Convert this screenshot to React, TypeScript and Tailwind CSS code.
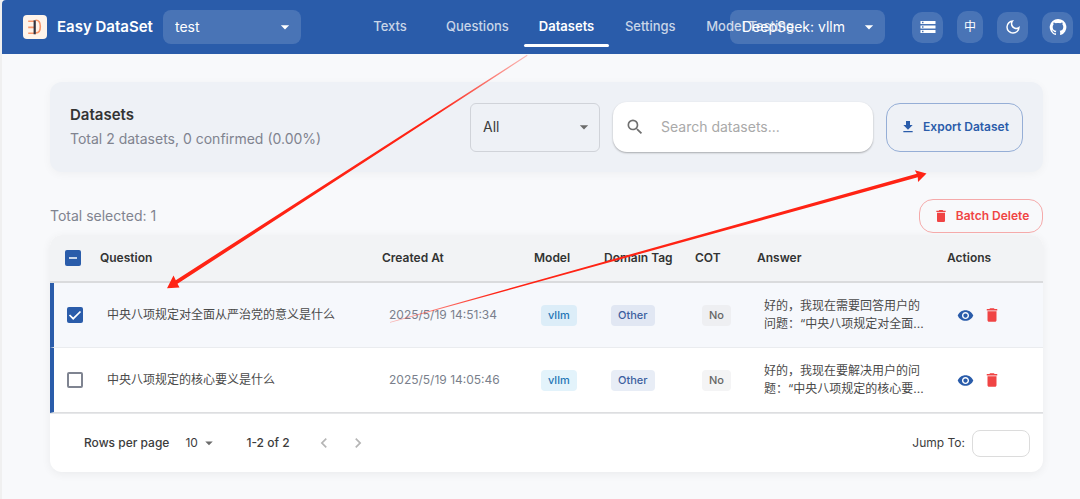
import { ReactNode } from "react";
import {
  MdArrowDropDown,
  MdChevronLeft,
  MdChevronRight,
  MdDelete,
  MdDownload,
  MdOutlineDarkMode,
  MdSearch,
  MdStorage,
  MdVisibility,
} from "react-icons/md";

type Row = {
  question: string;
  createdAt: string;
  model: string;
  tag: string;
  cot: string;
  answer: string[];
  selected: boolean;
};

const tabs = ["Texts", "Questions", "Datasets", "Settings", "Model Testing"];

const rows: Row[] = [
  {
    question: "中央八项规定对全面从严治党的意义是什么",
    createdAt: "2025/5/19 14:51:34",
    model: "vllm",
    tag: "Other",
    cot: "No",
    answer: ["好的，我现在需要回答用户的", "问题：“中央八项规定对全面..."],
    selected: true,
  },
  {
    question: "中央八项规定的核心要义是什么",
    createdAt: "2025/5/19 14:05:46",
    model: "vllm",
    tag: "Other",
    cot: "No",
    answer: ["好的，我现在要解决用户的问", "题：“中央八项规定的核心要..."],
    selected: false,
  },
];

function Logo() {
  return (
    <svg viewBox="0 0 24 24" className="size-6 shrink-0" aria-hidden="true">
      <rect width="24" height="24" rx="4" fill="#fff4ea" />
      <g fill="none" stroke="#f8956a" strokeWidth="1.6">
        <path d="M5.2 6.3h6M5.2 12.400h6M5.200 18.300h6" />
        <path d="M12.500 5.200h.6c2.700 0 4.200 2 4.200 6.300s-1.500 6.400-4.200 6.400h-.6" />
      </g>
      <path d="M11.700 5.300v14" stroke="#33333f" strokeWidth="2.200" />
    </svg>
  );
}

function GitHubIcon() {
  return (
    <svg viewBox="0 0 24 24" className="size-[18px]" fill="currentColor" aria-hidden="true">
      <path d="M12 1.27a11 11 0 00-3.48 21.46c.55.09.73-.28.73-.55v-1.84c-3.03.64-3.67-1.46-3.67-1.46-.55-1.29-1.28-1.65-1.28-1.65-.92-.65.1-.65.1-.65 1.1 0 1.73 1.1 1.73 1.1.92 1.65 2.57 1.2 3.21.92a2 2 0 01.64-1.47c-2.47-.27-5.04-1.19-5.04-5.5 0-1.1.46-2.1 1.2-2.84a3.76 3.76 0 010-2.93s.91-.28 3.11 1.1c1.8-.49 3.7-.49 5.5 0 2.1-1.38 3.02-1.1 3.02-1.1a3.76 3.76 0 01.1 2.93c.74.74 1.19 1.74 1.19 2.84 0 4.32-2.58 5.23-5.04 5.5.45.37.82.92.82 2.02v3.03c0 .27.1.64.73.55A11 11 0 0012 1.27" />
    </svg>
  );
}

function HeaderSelect({ label, value, className }: { label: string; value: string; className: string }) {
  return (
    <div className={`relative shrink-0 ${className}`}>
      <select
        aria-label={label}
        className="h-[34px] w-full appearance-none rounded-lg bg-white/15 pl-3 text-sm text-white"
      >
        <option>{value}</option>
      </select>
      <MdArrowDropDown className="pointer-events-none absolute top-[7px] right-[6px] size-5 text-white" />
    </div>
  );
}

function HeaderButton({ label, className, children }: { label: string; className: string; children: ReactNode }) {
  return (
    <button
      type="button"
      aria-label={label}
      className={`flex shrink-0 items-center justify-center rounded-[10px] bg-white/15 text-white ${className}`}
    >
      {children}
    </button>
  );
}

function Header() {
  return (
    <header className="flex h-[54px] items-center rounded-tl bg-[#2a5caa] pr-[7px] pl-[21px]">
      <Logo />
      <span className="ml-[10px] w-[93px] shrink-0 text-[15px] font-semibold whitespace-nowrap text-white">
        Easy DataSet
      </span>
      <HeaderSelect label="Project" value="test" className="ml-[13px] w-[138px]" />
      <nav className="ml-12 flex h-full min-w-0 flex-1">
        {tabs.map((tab) => (
          <a
            key={tab}
            href="#"
            className={`relative flex h-[54px] min-w-[82px] shrink-0 items-center justify-center px-[15px] text-[13px] whitespace-nowrap ${
              tab === "Datasets" ? "font-semibold text-white" : "font-medium text-white/75"
            }`}
          >
            {tab}
            {tab === "Datasets" && (
              <span className="absolute inset-x-0 bottom-[7px] h-[3px] rounded-full bg-white" />
            )}
          </a>
        ))}
      </nav>
      <HeaderSelect label="Model" value="DeepSeek: vllm" className="w-[155px]" />
      <div className="ml-[27px] flex shrink-0 items-center gap-[14px]">
        <HeaderButton label="Data sources" className="size-[31px]">
          <MdStorage className="size-[18px]" />
        </HeaderButton>
        <HeaderButton label="Language" className="h-8 w-[26px] text-xs">
          中
        </HeaderButton>
        <HeaderButton label="Dark mode" className="size-[31px]">
          <MdOutlineDarkMode className="size-[18px]" />
        </HeaderButton>
        <HeaderButton label="GitHub" className="size-[31px]">
          <GitHubIcon />
        </HeaderButton>
      </div>
    </header>
  );
}

function Toolbar() {
  return (
    <section className="flex items-center rounded-xl bg-[#eef1f6] px-5 py-5 shadow-[0_2px_10px_rgba(0,0,0,0.04)]">
      <div className="flex-1">
        <h1 className="text-[15px] leading-6 font-semibold text-[#333]">Datasets</h1>
        <p className="text-sm leading-6 text-[#80838f]">Total 2 datasets, 0 confirmed (0.00%)</p>
      </div>
      <div className="relative w-[130px]">
        <select
          aria-label="Status"
          className="h-[49px] w-full appearance-none rounded-md border border-[#d0d3d9] bg-transparent pl-3 text-sm text-[#3c3c3c]"
        >
          <option>All</option>
        </select>
        <MdArrowDropDown className="pointer-events-none absolute top-[14px] right-[6px] size-5 text-[#6b6b6b]" />
      </div>
      <label className="ml-[13px] flex h-[50px] w-[260px] items-center rounded-[14px] bg-white pl-3 shadow-[0_1px_2px_rgba(0,0,0,0.3)]">
        <MdSearch className="size-5 shrink-0 text-[#707070]" />
        <input
          aria-label="Search datasets"
          placeholder="Search datasets..."
          className="ml-4 w-full min-w-0 bg-transparent text-sm text-[#333] outline-none placeholder:text-[#a9a9a9]"
        />
      </label>
      <button
        type="button"
        className="ml-[13px] flex h-[49px] w-[137px] items-center justify-center gap-[7px] rounded-[14px] border border-[#95aed6] text-xs font-semibold whitespace-nowrap text-[#2a5caa]"
      >
        <MdDownload className="size-4" />
        Export Dataset
      </button>
    </section>
  );
}

function Chip({ className, children }: { className: string; children: ReactNode }) {
  return (
    <span className={`inline-flex h-[21px] items-center rounded px-[7px] text-[11px] font-medium ${className}`}>
      {children}
    </span>
  );
}

function MinusMark() {
  return (
    <svg viewBox="0 0 16 16" className="pointer-events-none absolute inset-0 size-4" aria-hidden="true">
      <path d="M4 8h8" stroke="#fff" strokeWidth="1.5" />
    </svg>
  );
}

function CheckMark() {
  return (
    <svg viewBox="0 0 16 16" className="pointer-events-none absolute inset-0 size-4" aria-hidden="true">
      <path d="M2.5 8l3.700 3.700L13.500 4.500" fill="none" stroke="#fff" strokeWidth="1.700" />
    </svg>
  );
}

function CheckBox({ label, filled, mark }: { label: string; filled: boolean; mark?: ReactNode }) {
  return (
    <span className="relative block size-4">
      <input
        type="checkbox"
        aria-label={label}
        defaultChecked={filled}
        className={`block size-4 appearance-none rounded-xs ${
          filled ? "bg-[#2a5caa]" : "border-2 border-[#7f8491] bg-white"
        }`}
      />
      {mark}
    </span>
  );
}

function DatasetTable() {
  return (
    <table className="w-full table-fixed border-separate border-spacing-0 text-left text-xs">
      <colgroup>
        <col className="w-9" />
        <col />
        <col className="w-[152px]" />
        <col className="w-[70px]" />
        <col className="w-[91px]" />
        <col className="w-[62px]" />
        <col className="w-[190px]" />
        <col className="w-[110px]" />
      </colgroup>
      <thead>
        <tr className="h-12 bg-[#f2f3f5] text-[#333]">
          <th className="border-b-2 border-[#dadbdd] pl-[15px]">
            <CheckBox label="Select all" filled mark={<MinusMark />} />
          </th>
          {["Question", "Created At", "Model", "Domain Tag", "COT", "Answer", "Actions"].map((head) => (
            <th key={head} className="border-b-2 border-[#dadbdd] pl-[14px] font-semibold whitespace-nowrap">
              {head}
            </th>
          ))}
        </tr>
      </thead>
      <tbody>
        {rows.map((row) => (
          <tr
            key={row.createdAt}
            className={`h-[65px] *:border-b ${
              row.selected ? "bg-[#f6f8fc] *:border-b-[#eaecef]" : "bg-white *:border-b-[#dddee0]"
            }`}
          >
            <td className="border-l-4 border-l-[#2a5caa] pl-[13px]">
              <CheckBox
                label={row.question}
                filled={row.selected}
                mark={row.selected ? <CheckMark /> : undefined}
              />
            </td>
            <td className="truncate pl-[21px] text-[#4a4a4a]">{row.question}</td>
            <td className="pl-[21px] whitespace-nowrap text-[#7a7f8c]">{row.createdAt}</td>
            <td className="pl-[21px]">
              <Chip className={row.selected ? "bg-[#dcedf8] text-[#2676b6]" : "bg-[#e3f3fb] text-[#2676b6]"}>
                {row.model}
              </Chip>
            </td>
            <td className="pl-[21px]">
              <Chip className={row.selected ? "bg-[#e1e7f3] text-[#3d5f9f]" : "bg-[#e8edf6] text-[#3d5f9f]"}>
                {row.tag}
              </Chip>
            </td>
            <td className="pl-[21px]">
              <Chip className={row.selected ? "bg-[#eeeff2] text-[#666]" : "bg-[#f4f4f5] text-[#666]"}>
                {row.cot}
              </Chip>
            </td>
            <td className="pl-[21px] leading-[18px] whitespace-nowrap text-[#4a4a4a]">
              {row.answer.map((line) => (
                <div key={line}>{line}</div>
              ))}
            </td>
            <td className="pl-6">
              <div className="flex items-center gap-[9px]">
                <button type="button" aria-label="View" className="text-[#2a5caa]">
                  <MdVisibility className="size-[17px]" />
                </button>
                <button type="button" aria-label="Delete" className="text-[#f04444]">
                  <MdDelete className="size-[18px]" />
                </button>
              </div>
            </td>
          </tr>
        ))}
      </tbody>
    </table>
  );
}

function Pagination() {
  return (
    <footer className="flex h-[59px] items-center border-t border-[#e6e7e9] pr-[13px] pl-[34px] text-xs text-[#3c3c3c]">
      <label htmlFor="page-size" className="font-medium">
        Rows per page
      </label>
      <div className="relative ml-4 w-8">
        <select id="page-size" className="w-full appearance-none bg-transparent">
          <option>10</option>
        </select>
        <MdArrowDropDown className="pointer-events-none absolute -top-px -right-px size-[18px] text-[#6b6b6b]" />
      </div>
      <span className="ml-[29px] font-medium">1-2 of 2</span>
      <div className="ml-6 flex gap-[14px] text-[#b5b5b5]">
        <button type="button" aria-label="Previous page">
          <MdChevronLeft className="size-5" />
        </button>
        <button type="button" aria-label="Next page">
          <MdChevronRight className="size-5" />
        </button>
      </div>
      <label htmlFor="jump-to" className="ml-auto">
        Jump To:
      </label>
      <input id="jump-to" className="ml-[7px] h-[27px] w-[58px] rounded-lg border border-[#dcdcdc] px-2" />
    </footer>
  );
}

function Arrows() {
  return (
    <svg
      viewBox="0 0 1080 499"
      className="pointer-events-none absolute top-0 -left-0.5 w-screen"
      aria-hidden="true"
    >
      <defs>
        <linearGradient id="fade-left" gradientUnits="userSpaceOnUse" x1="527" y1="56" x2="167" y2="288">
          <stop offset="0" stopColor="#ff2314" stopOpacity="0.3" />
          <stop offset="0.25" stopColor="#ff2314" />
        </linearGradient>
        <linearGradient id="fade-right" gradientUnits="userSpaceOnUse" x1="390" y1="322" x2="926" y2="173">
          <stop offset="0" stopColor="#ff2314" stopOpacity="0.3" />
          <stop offset="0.2" stopColor="#ff2314" />
        </linearGradient>
      </defs>
      <path
        d="M527.5 55.800L177.500 283.800L179.500 287.500L167 288.200L173.500 275.500L175.800 280.200L527 54.800Z"
        fill="url(#fade-left)"
      />
      <path
        d="M390 322L916.800 173.700L914.800 170.200L926.500 173.500L918 182L917.800 177.300L390 322.800Z"
        fill="url(#fade-right)"
      />
    </svg>
  );
}

export default function App() {
  return (
    <div className="relative min-h-screen border-l-2 border-[#f0f0f0] bg-[#f8f9fb] font-[Inter,'Noto_Sans_CJK_SC',sans-serif]">
      <Header />
      <main className="mt-7 mr-[37px] ml-12 pb-7">
        <Toolbar />
        <div className="mt-[27px] flex items-center justify-between">
          <span className="text-sm text-[#80838f]">Total selected: 1</span>
          <button
            type="button"
            className="flex h-[34px] w-[124px] items-center justify-center gap-[7px] rounded-[14px] border border-[#f5aaaa] text-xs font-semibold whitespace-nowrap text-[#f04444]"
          >
            <MdDelete className="size-4" />
            Batch Delete
          </button>
        </div>
        <section className="mt-[2px] overflow-hidden rounded-xl bg-white shadow-[0_2px_10px_rgba(0,0,0,0.06)]">
          <DatasetTable />
          <Pagination />
        </section>
      </main>
      <Arrows />
    </div>
  );
}
